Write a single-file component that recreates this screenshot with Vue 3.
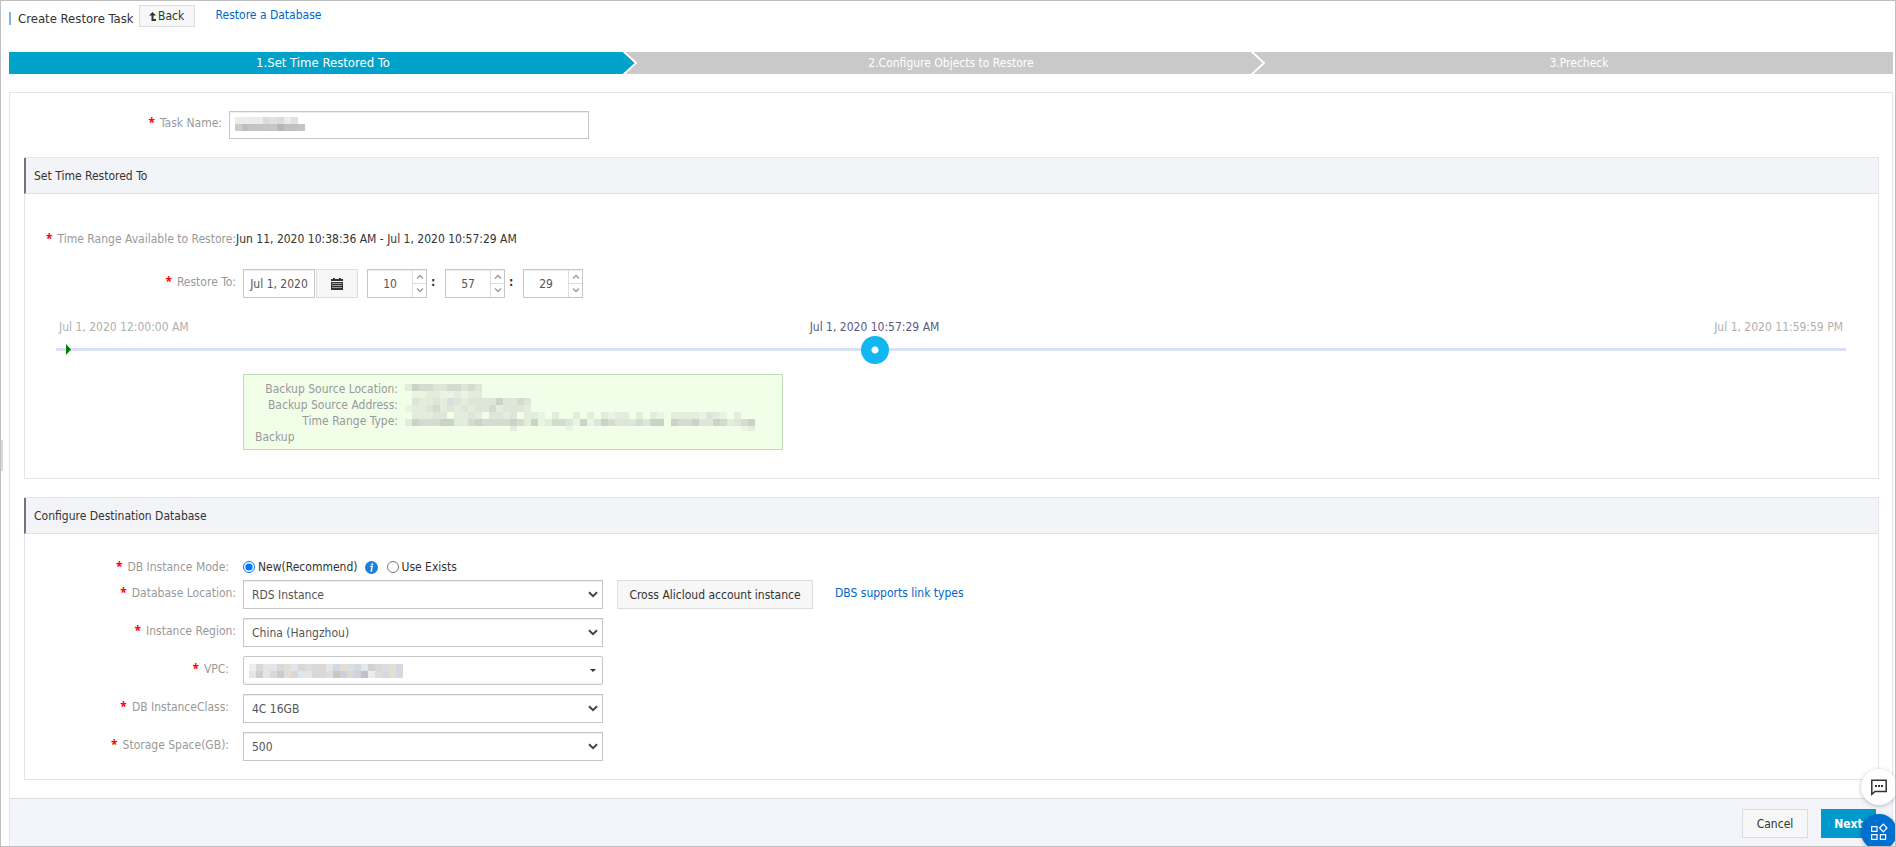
<script setup>
import { computed, ref } from 'vue'

const steps = ['1.Set Time Restored To', '2.Configure Objects to Restore', '3.Precheck']

const taskName = ref('')
const date = ref('Jul 1, 2020')
const clock = ref([
  { name: 'Hours', value: 10, max: 23 },
  { name: 'Minutes', value: 57, max: 59 },
  { name: 'Seconds', value: 29, max: 59 },
])
const lastSecond = 86399
const seconds = computed({
  get: () => clock.value[0].value * 3600 + clock.value[1].value * 60 + clock.value[2].value,
  set: (v) => {
    clock.value[0].value = Math.floor(v / 3600)
    clock.value[1].value = Math.floor((v % 3600) / 60)
    clock.value[2].value = v % 60
  },
})
const markerLeft = computed(() => `calc(14px + (100% - 28px) * ${seconds.value / lastSecond})`)
const markerText = computed(() => {
  const [h, m, s] = clock.value.map((c) => c.value)
  const pad = (n) => String(n).padStart(2, '0')
  return `Jul 1, 2020 ${h % 12 || 12}:${pad(m)}:${pad(s)} ${h < 12 ? 'AM' : 'PM'}`
})
const step = (c, d) => {
  c.value = Math.min(c.max, Math.max(0, Number(c.value) + d))
}

const mode = ref('new')
const fields = [
  { id: 'location', label: 'Database Location:', value: 'RDS Instance', cross: true },
  { id: 'region', label: 'Instance Region:', value: 'China (Hangzhou)' },
  { id: 'vpc', label: 'VPC:', inset: true, masked: true },
  { id: 'class', label: 'DB InstanceClass:', value: '4C 16GB', inset: true },
  { id: 'storage', label: 'Storage Space(GB):', value: '500', inset: true },
]

// Masked values are drawn as rows of 7px tiles; "." leaves a tile empty.
const tiles = (rows, palette) =>
  rows.flatMap((row, y) =>
    [...row].map((k, x) => ({ x: x * 7, y: y * 7, fill: palette[k] })).filter((t) => t.fill))

const nameTiles = tiles(['abccdedce.', 'fghhiijkkh'], {
  a: '#f0ebe5', b: '#e9edf0', c: '#ebebeb', d: '#dadddd', e: '#e0e1e3',
  f: '#d3cac1', g: '#bdbfc5', h: '#c3c4c7', i: '#c6c6c3', j: '#bcb4b5', k: '#bfc0c2',
})
const vpcTiles = tiles(['abccbfgbdbhcifdicjbdfi', 'ckcblfbgcbhdmnbjoqdbfi'], {
  a: '#f1edeb', b: '#d7d8da', c: '#e4e5e6', d: '#dcdddc', f: '#e2ddd5', g: '#e0e7ec',
  h: '#dcd6d4', i: '#d3d9e2', j: '#d4d0d5', k: '#d3cecb', l: '#cbcbca', m: '#ccc8bd', n: '#cfcedb',
  o: '#c5c0c8', q: '#e8eeec',
})
const backupTiles = tiles([
  'adccbbccbcb',
  '.ffeeffefee',
  '.beebegbebbbbdbbcb',
  'feebcebebebbcebbbe',
  '.eeebb.eebe.bbeb.eef.e..e.e.efee.e.ef.eeeefbef.e',
  'adcccddeecdccccdcedfeccbfdfbdcbbbcbdd.dccdbbdcebcd',
  '...............e.......f........................fe',
], {
  a: '#e3ebd9', b: '#dde6d8', c: '#d3dccf', d: '#cbd3c8', e: '#e3eddc', f: '#e9f5e2', g: '#d5e2dc',
})
</script>

<template>
  <div class="page">
    <header class="top">
      <h1 class="title">Create Restore Task</h1>
      <button class="btn back" type="button">
        <svg width="7" height="9" viewBox="0 0 7 9" aria-hidden="true">
          <path d="M3.5 0 7 3.5H4.5V7H7V9H2.5V3.5H0Z" fill="#333" />
        </svg>
        Back
      </button>
      <a class="link" href="#restore">Restore a Database</a>
    </header>

    <ol class="steps">
      <li v-for="(s, i) in steps" :key="s" class="step" :class="{ active: i === 0 }">
        {{ s }}
        <svg v-if="i < 2" class="arrow" width="15" height="22" viewBox="0 0 15 22" aria-hidden="true">
          <path d="M0 0 13 11 0 22H15V0Z" fill="#c9c9c9" />
          <path d="M0-1 13 11 0 23" fill="none" stroke="#fff" stroke-width="2" />
        </svg>
      </li>
    </ol>

    <main class="content">
      <div class="task">
        <label class="label task-label" for="task">Task Name:</label>
        <div class="masked-box">
          <input id="task" v-model="taskName" class="field wide" type="text" />
          <svg class="mask" width="70" height="14" aria-hidden="true">
            <rect v-for="(t, i) in nameTiles" :key="i" :x="t.x" :y="t.y" width="7" height="7" :fill="t.fill" />
          </svg>
        </div>
      </div>

      <section class="panel">
        <h2 class="panel-head">Set Time Restored To</h2>
        <div class="panel-body time-body">
          <div class="row range-row">
            <span class="label">Time Range Available to Restore:</span>
            <span>Jun 11, 2020 10:38:36 AM - Jul 1, 2020 10:57:29 AM</span>
          </div>

          <div class="row restore-row">
            <label class="label" for="date">Restore To:</label>
            <div class="controls">
              <input id="date" v-model="date" class="field date" type="text" />
              <button class="btn calendar" type="button" aria-label="Choose date">
                <svg width="12" height="12" viewBox="0 0 12 12" aria-hidden="true">
                  <path d="M2 0h2v1h4V0h2v1h2v2H0V1h2ZM0 4h12v8H0Z" fill="#333" />
                  <path d="M1 5.5h10M1 7.5h10M1 9.5h10" stroke="#a59c92" />
                </svg>
              </button>
              <template v-for="(c, i) in clock" :key="c.name">
                <span v-if="i" class="colon">:</span>
                <div class="spinner">
                  <input v-model.number="c.value" class="spin-input" type="text" :aria-label="c.name" />
                  <div class="spin-buttons">
                    <button type="button" class="spin" :aria-label="`${c.name} up`" @click="step(c, 1)">
                      <svg width="8" height="5" viewBox="0 0 8 5"><path d="M1 4.5 4 1.5 7 4.5" /></svg>
                    </button>
                    <button type="button" class="spin" :aria-label="`${c.name} down`" @click="step(c, -1)">
                      <svg width="8" height="5" viewBox="0 0 8 5"><path d="M1 .5 4 3.5 7 .5" /></svg>
                    </button>
                  </div>
                </div>
              </template>
            </div>
          </div>

          <div class="timeline">
            <div class="ends">
              <span>Jul 1, 2020 12:00:00 AM</span>
              <span>Jul 1, 2020 11:59:59 PM</span>
            </div>
            <label class="now" for="time" :style="{ left: markerLeft }">{{ markerText }}</label>
            <div class="track">
              <svg class="start" width="5" height="11" viewBox="0 0 5 11" aria-hidden="true">
                <path d="M0 0 5 5.5 0 11Z" fill="#008000" />
              </svg>
              <input id="time" v-model.number="seconds" class="slider" type="range" min="0" :max="lastSecond" />
            </div>
          </div>

          <div class="backup">
            <div class="backup-labels">
              <span>Backup Source Location:</span>
              <span>Backup Source Address:</span>
              <span>Time Range Type:</span>
              <span class="backup-word">Backup</span>
            </div>
            <svg class="backup-mask" width="350" height="47" aria-hidden="true">
              <rect v-for="(t, i) in backupTiles" :key="i" :x="t.x" :y="t.y" width="7" height="7" :fill="t.fill" />
            </svg>
          </div>
        </div>
      </section>

      <section class="panel">
        <h2 class="panel-head">Configure Destination Database</h2>
        <div class="panel-body db-body">
          <div class="row mode-row" role="radiogroup" aria-labelledby="mode-label">
            <span id="mode-label" class="label inset">DB Instance Mode:</span>
            <div class="controls radios">
              <input id="mode-new" v-model="mode" type="radio" name="mode" value="new" />
              <label for="mode-new">New(Recommend)</label>
              <svg class="info" width="13" height="13" viewBox="0 0 13 13" role="img" aria-label="Information">
                <circle cx="6.5" cy="6.5" r="6.5" fill="#1f7fd6" />
                <circle cx="7.3" cy="3.2" r="1" fill="#fff" />
                <path d="M5.2 5.4H7.2L6.2 9.8H7.3" fill="none" stroke="#fff" stroke-width="1.3" />
              </svg>
              <input id="mode-exists" v-model="mode" type="radio" name="mode" value="exists" />
              <label for="mode-exists">Use Exists</label>
            </div>
          </div>

          <div v-for="f in fields" :key="f.id" class="row">
            <label class="label" :class="{ inset: f.inset }" :for="f.id">{{ f.label }}</label>
            <div class="controls">
              <button v-if="f.masked" :id="f.id" class="field combo" type="button" aria-haspopup="listbox">
                <svg width="154" height="14" aria-hidden="true">
                  <rect v-for="(t, i) in vpcTiles" :key="i" :x="t.x" :y="t.y" width="7" height="7" :fill="t.fill" />
                </svg>
                <svg width="6" height="3" viewBox="0 0 6 3" aria-hidden="true">
                  <path d="M0 0H6L3 3Z" fill="#333" />
                </svg>
              </button>
              <div v-else class="select">
                <select :id="f.id" class="field wide">
                  <option>{{ f.value }}</option>
                </select>
                <svg class="chevron" width="10" height="7" viewBox="0 0 10 7" aria-hidden="true">
                  <path d="M1 1.2 5 5.2 9 1.2" fill="none" stroke="#444" stroke-width="2" />
                </svg>
              </div>
              <template v-if="f.cross">
                <button class="btn cross" type="button">Cross Alicloud account instance</button>
                <a class="link types" href="#link-types">DBS supports link types</a>
              </template>
            </div>
          </div>
        </div>
      </section>

      <footer class="footer">
        <button class="btn action" type="button">Cancel</button>
        <button class="btn action next" type="button">Next</button>
      </footer>
    </main>

    <button class="side-tab" type="button" aria-label="Expand menu"></button>

    <div class="floats">
      <button class="float chat" type="button" aria-label="Chat">
        <svg width="18" height="17" viewBox="0 0 18 17" aria-hidden="true">
          <path d="M1.8 1.2H16.2V12.5H5L1.8 15.3Z" fill="none" stroke="#333" stroke-width="1.5" />
          <path d="M5 6h2v2H5ZM8 6h2v2H8ZM11 6h2v2H11Z" fill="#333" />
        </svg>
      </button>
      <button class="float apps" type="button" aria-label="Apps">
        <svg width="18" height="18" viewBox="0 0 18 18" fill="none" stroke="#fff" stroke-width="1.2" aria-hidden="true">
          <path d="M1.6 3.6H7V8.4H1.6ZM1.6 11.6H7V16.4H1.6ZM10.4 11.6H15.6V16.4H10.4ZM13.3 1.2 17 5 13.3 8.8 9.6 5Z" />
        </svg>
      </button>
    </div>
  </div>
</template>

<style>
body {
  background: #fff;
}
</style>

<style scoped>
* {
  box-sizing: border-box;
}
.page {
  position: relative;
  min-height: 100vh;
  display: flex;
  flex-direction: column;
  overflow: hidden;
  padding: 4px 2px 0 8px;
  border: 1px solid #bfbfbf;
  color: #333;
  font: 12px/16px "DejaVu Sans Condensed", "Noto Sans", sans-serif;
}
button,
input,
select {
  margin: 0;
  font: inherit;
}
svg {
  display: block;
  flex: none;
}
.top {
  display: flex;
  align-items: flex-start;
  height: 47px;
}
.title {
  margin: 7px 5px 0 0;
  padding-left: 7px;
  border-left: 2px solid #84b3dc;
  font-size: 13px;
  font-weight: 400;
  line-height: 13px;
}
.btn {
  display: inline-flex;
  align-items: center;
  justify-content: center;
  padding: 0;
  border: 1px solid #ddd;
  border-radius: 0;
  background: #f7f7f7;
  color: #333;
  cursor: pointer;
}
.back {
  gap: 2px;
  width: 56px;
  height: 22px;
}
.link {
  color: #06c;
  text-decoration: none;
  line-height: 20px;
}
.top .link {
  margin-left: 21px;
}
.steps {
  display: flex;
  margin: 0;
  padding: 0;
  list-style: none;
}
.step {
  position: relative;
  flex: 1;
  height: 22px;
  background: #c9c9c9;
  color: #fff;
  line-height: 22px;
  text-align: center;
}
.step.active {
  background: #00a2ca;
  font-size: 13px;
}
.arrow {
  position: absolute;
  top: 0;
  right: -1px;
}
.content {
  flex: 1;
  display: flex;
  flex-direction: column;
  margin-top: 18px;
  border: 1px solid #e1e6eb;
  border-bottom: 0;
}
.task {
  display: flex;
  gap: 7px;
  padding: 18px 0;
}
.label {
  color: #999;
  text-align: right;
}
.label::before {
  content: "*";
  margin-right: 5px;
  color: #f00;
  font-family: "Noto Sans", sans-serif;
  font-weight: 700;
}
.task-label {
  width: 212px;
  line-height: 24px;
}
.field {
  height: 29px;
  padding: 0 8px;
  border: 1px solid #c6c6c6;
  border-radius: 0;
  background: #fff;
  box-shadow: inset 0 1px 1px #eee;
  color: #555;
}
.wide {
  width: 360px;
}
.task .field {
  display: block;
  height: 28px;
}
.masked-box,
.select {
  position: relative;
}
.mask {
  position: absolute;
  top: 6px;
  left: 6px;
}
.panel {
  margin: 0 13px 18px 14px;
  border: 1px solid #e1e6eb;
  border-left: 0;
}
.panel-head {
  height: 36px;
  margin: 0;
  padding-left: 8px;
  border-left: 2px solid #737383;
  border-bottom: 1px solid #dde2e8;
  background: #f3f4f8;
  font-size: 12px;
  font-weight: 400;
  line-height: 36px;
}
.panel-body {
  display: flex;
  flex-direction: column;
  border-left: 1px solid #e1e6eb;
}
.time-body {
  padding: 35px 0 28px;
}
.db-body {
  gap: 9px;
  padding: 23px 0 18px;
}
.row {
  display: flex;
  gap: 7px;
}
.row .label {
  flex: none;
  width: 211px;
  line-height: 26px;
}
.row .inset {
  padding-right: 7px;
}
.range-row {
  gap: 0;
  line-height: 20px;
}
.range-row .label,
.mode-row .label {
  line-height: 20px;
}
.restore-row {
  margin-top: 20px;
}
.controls {
  display: flex;
}
.date {
  width: 72px;
  padding: 0;
  text-align: center;
}
.calendar {
  width: 42px;
  margin: 0 9px 0 1px;
}
.colon {
  width: 18px;
  padding-left: 4px;
  font-weight: 700;
  line-height: 26px;
}
.spinner {
  display: flex;
  width: 60px;
  height: 29px;
  border: 1px solid #c6c6c6;
  box-shadow: inset 0 1px 1px #eee;
}
.spin-input {
  flex: 1;
  min-width: 0;
  padding: 0;
  border: 0;
  background: none;
  color: #555;
  text-align: center;
}
.spin-buttons {
  display: flex;
  flex-direction: column;
  width: 14px;
  border-left: 1px solid #ddd;
}
.spin {
  flex: 1;
  display: flex;
  align-items: center;
  justify-content: center;
  padding: 0;
  border: 0;
  background: none;
}
.spin + .spin {
  border-top: 1px solid #ddd;
}
.spin path {
  fill: none;
  stroke: #999;
  stroke-width: 1.3;
}
.timeline {
  position: relative;
  margin: 20px 32px 0 31px;
}
.ends {
  display: flex;
  justify-content: space-between;
  padding: 0 3px;
  color: #b0b0b0;
  line-height: 18px;
}
.now {
  position: absolute;
  top: 0;
  transform: translateX(-50%);
  color: #5a5a80;
  line-height: 18px;
  white-space: nowrap;
}
.track {
  position: relative;
}
.start {
  position: absolute;
  top: 8px;
  left: 10px;
}
.slider {
  display: block;
  width: 100%;
  height: 28px;
  appearance: none;
  background: linear-gradient(#d9e1f3, #d9e1f3) 0 12px / 100% 3px no-repeat;
}
.slider::-webkit-slider-thumb {
  width: 28px;
  height: 28px;
  appearance: none;
  border-radius: 50%;
  background: radial-gradient(circle, #fff 3px, #10b7f0 4px);
}
.backup {
  display: flex;
  gap: 7px;
  width: 540px;
  margin: 10px 0 0 218px;
  padding: 6px 11px 4px;
  border: 1px solid #bfdcb4;
  background: #f1ffe9;
  color: #999;
}
.backup-labels {
  display: flex;
  flex-direction: column;
  width: 143px;
  text-align: right;
}
.backup-word {
  text-align: left;
}
.backup-mask {
  margin-top: 3px;
}
.mode-row {
  margin-bottom: -6px;
}
.radios {
  align-items: center;
  height: 20px;
}
.radios input {
  width: 12px;
  height: 12px;
}
.radios label {
  margin: 0 7px 0 3px;
}
.info {
  margin-right: 9px;
}
.select .field {
  display: block;
  appearance: none;
}
.chevron {
  position: absolute;
  top: 11px;
  right: 5px;
  pointer-events: none;
}
.combo {
  display: flex;
  align-items: center;
  justify-content: space-between;
  width: 360px;
  padding: 0 6px 0 5px;
  border-radius: 2px;
  box-shadow: inset 0 -2px 1px #f6f6f6;
}
.cross {
  width: 196px;
  margin: 0 22px 0 14px;
}
.types {
  line-height: 26px;
}
.footer {
  flex: 1;
  display: flex;
  gap: 13px;
  justify-content: flex-end;
  align-items: flex-start;
  padding: 10px 16px 8px;
  border-top: 1px solid #d9dbdf;
  background: #f4f5fa;
}
.action {
  width: 66px;
  height: 29px;
}
.next {
  width: 55px;
  border-color: #0099cc;
  background: #0099cc;
  color: #fff;
  font-weight: 700;
}
.side-tab {
  position: absolute;
  top: 52%;
  left: 0;
  width: 2px;
  height: 31px;
  padding: 0;
  border: 0;
  background: #d3dce3;
}
.floats {
  position: absolute;
  right: -2px;
  bottom: -4px;
  display: flex;
  flex-direction: column;
  gap: 9px;
}
.float {
  display: flex;
  align-items: center;
  justify-content: center;
  width: 36px;
  height: 36px;
  padding: 0;
  border: 0;
  border-radius: 50%;
  box-shadow: 0 1px 4px rgba(0, 0, 0, 0.25);
}
.chat {
  background: #fff;
}
.apps {
  background: #0070d0;
}
</style>
